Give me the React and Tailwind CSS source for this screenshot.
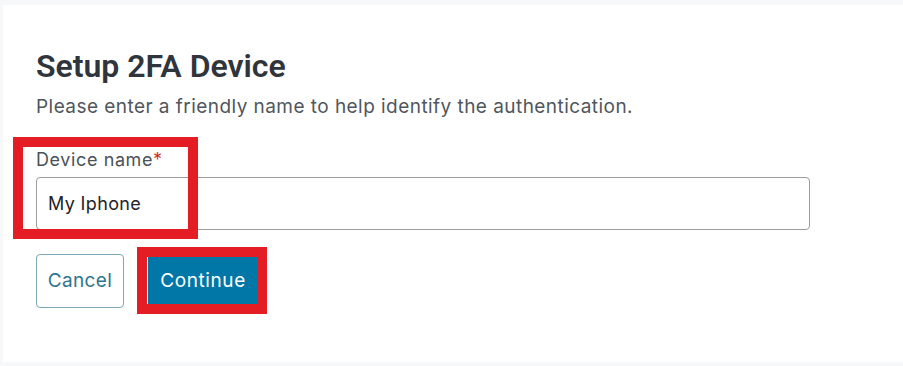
export default function App() {
  return (
    <div className="min-h-[366px] bg-[#f7f8fa] pt-[5px] pl-[3px]" style={{ fontFamily: "Inter, 'Liberation Sans', sans-serif" }}>
      <div className="relative h-[357px] bg-white pl-[33px] pt-[41px]">
        <h1 className="text-[32px] leading-[40px] font-semibold text-[#30353b]" style={{ fontFamily: "Roboto, sans-serif" }}>Setup 2FA Device</h1>
        <p className="mt-[9px] text-[19px] leading-[24px] tracking-[0.45px] text-[#50565c]">
          Please enter a friendly name to help identify the authentication.
        </p>
        <label className="mt-[29px] block text-[18px] leading-[24px] tracking-[0.6px] text-[#4b5158]">
          Device name<span className="text-[#c8342b]">*</span>
        </label>
        <div className="mt-[5px] flex h-[53px] w-[774px] items-center rounded-[4px] border border-[#9c9ca0] pl-[11px] text-[18px] tracking-[0.35px] text-[#1f2328]">
          My Iphone
        </div>
        <div className="mt-[24px] flex gap-[24px]">
          <button className="h-[54px] w-[88px] rounded-[4px] border border-[#7aa8b7] text-[19px] tracking-[0.35px] text-[#2d7590]">
            Cancel
          </button>
          <button className="h-[54px] w-[110px] bg-[#0077a6] text-[19px] tracking-[0.6px] text-white">
            Continue
          </button>
        </div>
        <div className="pointer-events-none absolute left-[10px] top-[132px] h-[102px] w-[185px] border-[10px] border-[#e41d24]" />
        <div className="pointer-events-none absolute left-[134px] top-[242px] h-[67px] w-[130px] border-[10px] border-[#e41d24]" />
      </div>
    </div>
  );
}
